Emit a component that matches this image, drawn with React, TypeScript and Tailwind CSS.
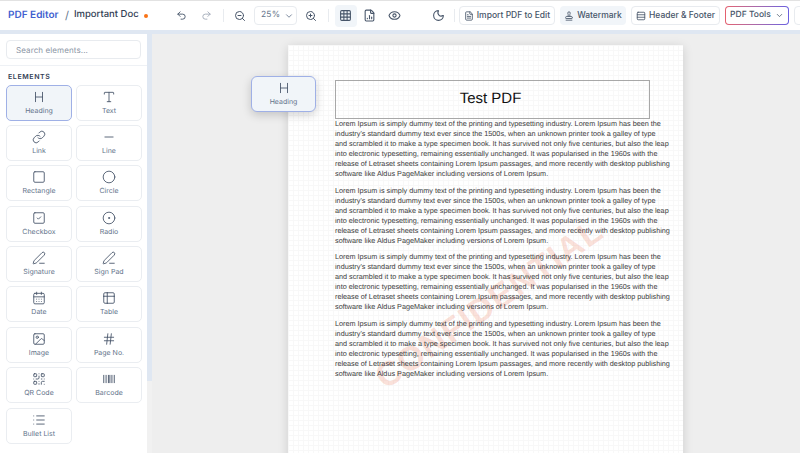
import React from "react";
import {
  Undo2, Redo2, ZoomOut, ZoomIn, Grid3x3, FileChartColumn, Eye, Moon, FileText, Stamp, Rows3, ChevronDown,
  Heading, Type, Link, Minus, Square, Circle, SquareCheck, CircleDot, PenLine, CalendarDays, Table2, Image, Hash, QrCode, List,
} from "lucide-react";

// broken by hand so every paragraph wraps the way the PDF does
const LOREM_LINES = [
  "Lorem Ipsum is simply dummy text of the printing and typesetting industry. Lorem Ipsum has been the",
  "industry's standard dummy text ever since the 1500s, when an unknown printer took a galley of type",
  "and scrambled it to make a type specimen book. It has survived not only five centuries, but also the leap",
  "into electronic typesetting, remaining essentially unchanged. It was popularised in the 1960s with the",
  "release of Letraset sheets containing Lorem Ipsum passages, and more recently with desktop publishing",
  "software like Aldus PageMaker including versions of Lorem Ipsum.",
];

const BarcodeIcon = ({ className }: { className?: string }) => (
  <svg viewBox="0 0 24 24" fill="none" stroke="currentColor" strokeWidth="1.6" className={className}>
    <path d="M3 5v14M7 5v14M11 5v14M13.5 5v14M17 5v14M21 5v14" />
  </svg>
);

const elements = [
  { label: "Heading", icon: Heading, active: true },
  { label: "Text", icon: Type },
  { label: "Link", icon: Link },
  { label: "Line", icon: Minus },
  { label: "Rectangle", icon: Square },
  { label: "Circle", icon: Circle },
  { label: "Checkbox", icon: SquareCheck },
  { label: "Radio", icon: CircleDot },
  { label: "Signature", icon: PenLine },
  { label: "Sign Pad", icon: PenLine },
  { label: "Date", icon: CalendarDays },
  { label: "Table", icon: Table2 },
  { label: "Image", icon: Image },
  { label: "Page No.", icon: Hash },
  { label: "QR Code", icon: QrCode },
  { label: "Barcode", icon: BarcodeIcon },
  { label: "Bullet List", icon: List },
];

const Sep = ({ className }: { className: string }) => <div className={`h-[13px] w-px bg-[#e8ebef] ${className}`} />;

const iconClass = "h-[13px] w-[13px] text-[#475569]";

const App = () => {
  return (
    <div className="relative flex h-[453px] w-[800px] flex-col overflow-hidden bg-[#eeeeee] font-['Inter',sans-serif] text-[#475569] [text-rendering:geometricPrecision]">
      {/* top bar */}
      <header className="flex h-[30px] shrink-0 items-center overflow-hidden whitespace-nowrap border-t border-[#e2e2e2] bg-white pl-2 [&>*]:shrink-0">
        <span className="w-[51px] text-[10px] font-semibold text-[#3f5fd0]">PDF Editor</span>
        <span className="ml-[6px] text-[11px] text-[#64748b]">/</span>
        <span className="ml-[5px] w-[65px] text-[9.5px] font-medium text-[#334155]">Important Doc</span>
        <span className="ml-[5px] h-[4px] w-[4px] rounded-full bg-[#f97316]" />
        <Undo2 className="ml-[28px] h-[11px] w-[11px] text-[#475569]" />
        <Redo2 className="ml-[14px] h-[11px] w-[11px] text-[#a3acb9]" />
        <Sep className="ml-[11px]" />
        <ZoomOut className="ml-[10px] h-[12px] w-[12px] text-[#475569]" />
        <div className="ml-[8px] flex h-[19px] w-[43px] items-center justify-between rounded border border-[#e8ebef] pl-[6px] pr-[2px] text-[8.5px] tracking-[0.2px] text-[#64748b]">
          25%
          <ChevronDown className="h-[10px] w-[10px]" />
        </div>
        <ZoomIn className="ml-[8px] h-[12px] w-[12px] text-[#475569]" />
        <Sep className="ml-[11px]" />
        <div className="ml-[6px] flex h-[22px] w-[22px] items-center justify-center rounded bg-[#f1f5f9]">
          <Grid3x3 className={iconClass} />
        </div>
        <FileChartColumn className={`ml-[6px] ${iconClass}`} />
        <Eye className={`ml-[12px] ${iconClass}`} />
        <Moon className={`ml-[31px] ${iconClass}`} />
        <Sep className="ml-[9px]" />
        <button className="ml-[4px] flex h-[19px] w-[96px] items-center justify-center gap-[3px] rounded border border-[#e8ebef] text-[8.5px] font-medium text-[#475569]">
          <FileText className="h-[10px] w-[10px]" />
          Import PDF to Edit
        </button>
        <button className="ml-[5px] flex h-[19px] w-[66px] items-center justify-center gap-[3px] rounded bg-[#f1f5f9] text-[8.5px] font-medium text-[#475569]">
          <Stamp className="h-[10px] w-[10px]" />
          Watermark
        </button>
        <button className="ml-[5px] flex h-[19px] w-[89px] items-center justify-center gap-[3px] rounded border border-[#e8ebef] text-[8.5px] font-medium text-[#475569]">
          <Rows3 className="h-[10px] w-[10px]" />
          Header &amp; Footer
        </button>
        <div className="ml-[5px] h-[19px] w-[64px] rounded bg-linear-to-r from-[#e5606e] to-[#6a5fe0] p-px">
          <div className="flex h-full w-full items-center justify-center gap-[4px] rounded-[3px] bg-white text-[8.5px] font-medium text-[#475569]">
            PDF Tools
            <ChevronDown className="h-[9px] w-[9px]" />
          </div>
        </div>
        <div className="ml-[5px] h-[19px] w-[20px] rounded border border-[#e8ebef]" />
      </header>
      <div className="h-[4px] shrink-0 bg-[#dfe7f2]" />

      <div className="flex min-h-0 flex-1">
        {/* sidebar */}
        <aside className="flex w-[147px] shrink-0 flex-col bg-white">
          <div className="border-b border-[#eef1f5] px-[6px] pb-[6px] pt-[6px]">
            <div className="flex h-[19px] items-center rounded border border-[#e8ebef] pl-[9px] text-[8px] tracking-[0.1px] text-[#8b95a5]">
              Search elements...
            </div>
          </div>
          <div className="px-[6px] pt-[5.5px]">
            <div className="pl-[2px] text-[7px] font-semibold leading-[9px] tracking-[0.6px] text-[#334155]">ELEMENTS</div>
            <div className="mt-[4px] grid grid-cols-[66px_66px] gap-x-[4px] gap-y-[4.4px]">
              {elements.map((el) => (
                <div
                  key={el.label}
                  className={`flex h-[36px] flex-col items-center justify-center rounded-[5px] border ${
                    el.active ? "border-[#9fb0e6] bg-[#f1f5f9]" : "border-[#eaedf1] bg-white"
                  }`}
                >
                  <el.icon className="h-[14px] w-[14px] text-[#475569]" strokeWidth={1.5} />
                  <span className="mt-[2px] text-[7px] leading-[10px] text-[#64748b]">{el.label}</span>
                </div>
              ))}
            </div>
          </div>
        </aside>
        <div className="w-[5px] shrink-0 bg-[#f1f1f1]">
          <div className="h-[347px] bg-[#dfe7f2]" />
        </div>

        {/* canvas */}
        <main className="min-w-0 flex-1 pl-[136px] pt-[11px]">
          <div className="relative h-[500px] w-[395px] overflow-hidden bg-white bg-[linear-gradient(#f8f8f8_1px,transparent_1px),linear-gradient(90deg,#f8f8f8_1px,transparent_1px)] bg-[size:5px_5px] pl-[47px] pt-[35px] font-['Liberation_Sans',Arial,sans-serif] shadow-[0_2px_10px_rgba(0,0,0,0.14)]">
            <div className="absolute left-[67px] top-[242px] -rotate-[35deg] whitespace-nowrap text-[34px] font-bold leading-none tracking-[1.3px] text-[#e8603c]/20">
              CONFIDENTIAL
            </div>
            <div className="relative flex h-[39px] w-[315px] items-center justify-center border border-[#a8a8a8] pr-[4px] text-[15px] text-[#111111]">
              Test PDF
            </div>
            <div className="relative flex flex-col gap-[6.5px] whitespace-nowrap text-[7.25px] leading-[10px] text-[#3d3d3d]">
              {[0, 1, 2, 3].map((i) => (
                <p key={i}>
                  {LOREM_LINES.map((line) => (
                    <span key={line} className="block">
                      {line}
                    </span>
                  ))}
                </p>
              ))}
            </div>
          </div>
        </main>
      </div>

      {/* element being dragged */}
      <div className="absolute left-[251px] top-[76px] flex h-[36px] w-[65px] flex-col items-center justify-center rounded-[6px] border border-[#9fb0e6] bg-[#f1f5f9] shadow-[0_3px_10px_rgba(0,0,0,0.18)]">
        <Heading className="h-[14px] w-[14px] text-[#475569]" strokeWidth={1.5} />
        <span className="mt-[2px] text-[7px] leading-[10px] text-[#64748b]">Heading</span>
      </div>
    </div>
  );
};

export default App;
